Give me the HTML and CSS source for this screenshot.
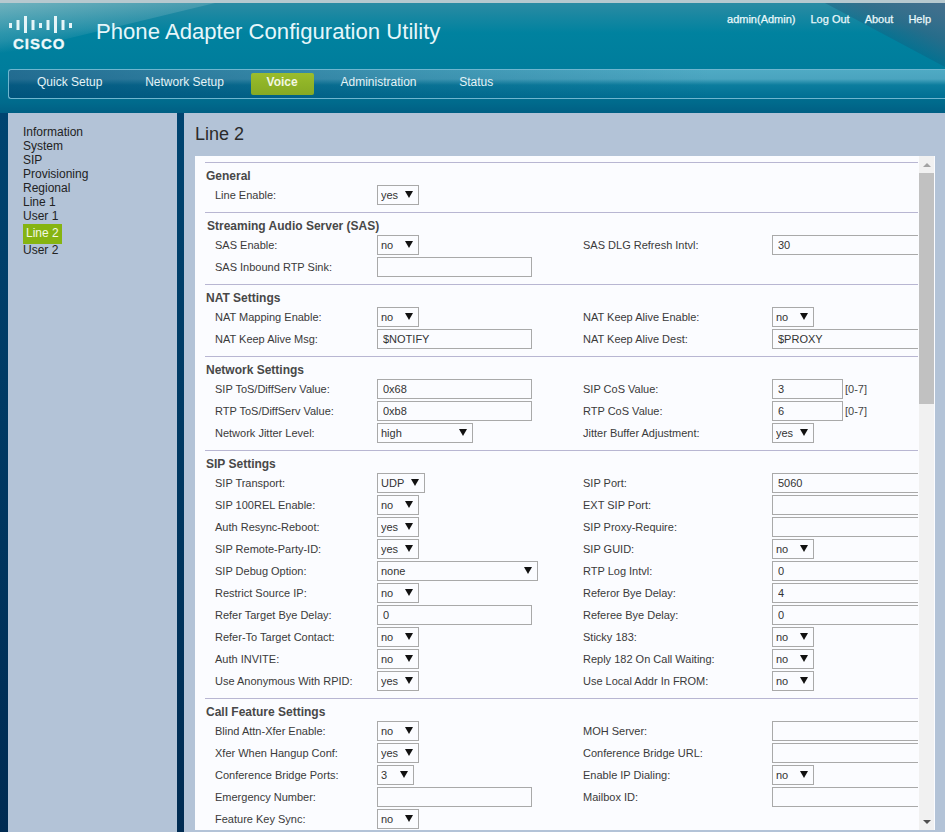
FILE: index.html
```html
<!DOCTYPE html>
<html lang="en">
<head>
<meta charset="utf-8">
<title>Phone Adapter Configuration Utility</title>
<link rel="stylesheet" href="styles.css">
</head>
<body>
<header class="header">
  <div class="top">
    <div class="logo">
      <svg class="bars" width="64" height="20" viewBox="0 0 64 20" aria-hidden="true">
        <rect x="0" y="7" width="3" height="5"/><rect x="7.5" y="4" width="3" height="10"/><rect x="15" y="0" width="3" height="17"/><rect x="22.500" y="4" width="3" height="10"/><rect x="30" y="7" width="3" height="5"/><rect x="37.500" y="4" width="3" height="10"/><rect x="45" y="0" width="3" height="17"/><rect x="52.500" y="4" width="3" height="10"/><rect x="60" y="7" width="3" height="5"/>
      </svg>
      <span class="wordmark">CISCO</span>
    </div>
    <h1 class="app-title">Phone Adapter Configuration Utility</h1>
    <nav class="user-links"><a>admin(Admin)</a><a>Log Out</a><a>About</a><a>Help</a></nav>
  </div>
  <nav class="tabs">
    <a class="tab">Quick Setup</a><a class="tab">Network Setup</a><a class="tab tab-active">Voice</a><a class="tab">Administration</a><a class="tab">Status</a>
  </nav>
</header>
<div class="layout">
  <aside class="sidebar">
    <a class="side-link">Information</a>
    <a class="side-link">System</a>
    <a class="side-link">SIP</a>
    <a class="side-link">Provisioning</a>
    <a class="side-link">Regional</a>
    <a class="side-link">Line 1</a>
    <a class="side-link">User 1</a>
    <a class="side-link side-active">Line 2</a>
    <a class="side-link">User 2</a>
  </aside>
  <main class="main">
    <h2 class="page-title">Line 2</h2>
    <div class="box">
      <div class="pane">
        <section class="group">
          <h3>General</h3>
          <div class="row"><label>Line Enable:</label><select class="s42"><option>yes</option></select></div>
        </section>
        <section class="group">
          <h3 class="indent">Streaming Audio Server (SAS)</h3>
          <div class="row"><label>SAS Enable:</label><select class="s42"><option>no</option></select><label>SAS DLG Refresh Intvl:</label><input value="30"></div>
          <div class="row"><label>SAS Inbound RTP Sink:</label><input></div>
        </section>
        <section class="group">
          <h3>NAT Settings</h3>
          <div class="row"><label>NAT Mapping Enable:</label><select class="s42"><option>no</option></select><label>NAT Keep Alive Enable:</label><select class="s42"><option>no</option></select></div>
          <div class="row"><label>NAT Keep Alive Msg:</label><input value="$NOTIFY"><label>NAT Keep Alive Dest:</label><input value="$PROXY"></div>
        </section>
        <section class="group">
          <h3>Network Settings</h3>
          <div class="row"><label>SIP ToS/DiffServ Value:</label><input value="0x68"><label>SIP CoS Value:</label><span class="unit"><input class="short" value="3">[0-7]</span></div>
          <div class="row"><label>RTP ToS/DiffServ Value:</label><input value="0xb8"><label>RTP CoS Value:</label><span class="unit"><input class="short" value="6">[0-7]</span></div>
          <div class="row"><label>Network Jitter Level:</label><select class="s96"><option>high</option></select><label>Jitter Buffer Adjustment:</label><select class="s42"><option>yes</option></select></div>
        </section>
        <section class="group">
          <h3>SIP Settings</h3>
          <div class="row"><label>SIP Transport:</label><select class="s48"><option>UDP</option></select><label>SIP Port:</label><input value="5060"></div>
          <div class="row"><label>SIP 100REL Enable:</label><select class="s42"><option>no</option></select><label>EXT SIP Port:</label><input></div>
          <div class="row"><label>Auth Resync-Reboot:</label><select class="s42"><option>yes</option></select><label>SIP Proxy-Require:</label><input></div>
          <div class="row"><label>SIP Remote-Party-ID:</label><select class="s42"><option>yes</option></select><label>SIP GUID:</label><select class="s42"><option>no</option></select></div>
          <div class="row"><label>SIP Debug Option:</label><select class="s161"><option>none</option></select><label>RTP Log Intvl:</label><input value="0"></div>
          <div class="row"><label>Restrict Source IP:</label><select class="s42"><option>no</option></select><label>Referor Bye Delay:</label><input value="4"></div>
          <div class="row"><label>Refer Target Bye Delay:</label><input value="0"><label>Referee Bye Delay:</label><input value="0"></div>
          <div class="row"><label>Refer-To Target Contact:</label><select class="s42"><option>no</option></select><label>Sticky 183:</label><select class="s42"><option>no</option></select></div>
          <div class="row"><label>Auth INVITE:</label><select class="s42"><option>no</option></select><label>Reply 182 On Call Waiting:</label><select class="s42"><option>no</option></select></div>
          <div class="row"><label>Use Anonymous With RPID:</label><select class="s42"><option>yes</option></select><label>Use Local Addr In FROM:</label><select class="s42"><option>no</option></select></div>
        </section>
        <section class="group">
          <h3>Call Feature Settings</h3>
          <div class="row"><label>Blind Attn-Xfer Enable:</label><select class="s42"><option>no</option></select><label>MOH Server:</label><input></div>
          <div class="row"><label>Xfer When Hangup Conf:</label><select class="s42"><option>yes</option></select><label>Conference Bridge URL:</label><input></div>
          <div class="row"><label>Conference Bridge Ports:</label><select class="s37"><option>3</option></select><label>Enable IP Dialing:</label><select class="s42"><option>no</option></select></div>
          <div class="row"><label>Emergency Number:</label><input><label>Mailbox ID:</label><input></div>
          <div class="row"><label>Feature Key Sync:</label><select class="s42"><option>no</option></select></div>
        </section>
      </div>
      <div class="scrollbar" aria-hidden="true">
        <div class="sb-btn"><span class="arrow-up"></span></div>
        <div class="sb-thumb"></div>
        <div class="sb-space"></div>
        <div class="sb-btn"><span class="arrow-down"></span></div>
      </div>
    </div>
  </main>
</div>
</body>
</html>
```
FILE: styles.css
```css
* { box-sizing: border-box; }
html, body { margin: 0; height: 832px; overflow: hidden; }
body {
  font-family: "Liberation Sans", Arial, sans-serif;
  font-size: 11px;
  color: #333;
  background: linear-gradient(180deg, #004470 113px, #002b52 100%);
}

/* Header */
.header {
  position: relative;
  height: 113px;
  border-top: 3px solid #b7c9cf;
  background: linear-gradient(180deg, #2b8ba3 0, #00829f 30px, #007d9c 66px, #006a8c 100px, #005f84 110px);
  overflow: hidden;
}
.header::before {
  content: "";
  position: absolute;
  inset: 0;
  background: linear-gradient(172deg, rgba(150, 200, 205, .62) 0, rgba(110, 175, 190, .3) 38px, rgba(0, 80, 120, 0) 50px);
  clip-path: polygon(0 0, 215px 0, 0 52px);
}
.header::after {
  content: "";
  position: absolute;
  inset: 0;
  background: linear-gradient(205deg, #446f8d 0, rgba(55, 100, 130, .7) 35px, rgba(0, 90, 125, .35) 60px, rgba(0, 110, 140, 0) 75px);
  clip-path: polygon(825px 0, 945px 0, 945px 64px);
}
.top {
  position: relative;
  z-index: 1;
  display: flex;
  height: 66px;
  padding: 13px 14px 0 9px;
}
.logo { width: 87px; display: flex; flex-direction: column; }
.bars { display: block; fill: #e6f5f8; }
.wordmark {
  margin: 1px 0 0 4px;
  font-size: 15px;
  line-height: 13px;
  font-weight: 700;
  letter-spacing: 1px;
  -webkit-text-stroke: .3px #eef9fb;
  color: #eef9fb;
}
.app-title {
  margin: 2px 0 0;
  font-size: 22.13px;
  line-height: 28px;
  font-weight: 400;
  color: #e6f6fa;
}
.user-links {
  margin-left: auto;
  display: flex;
  gap: 15px;
  margin-top: -4px;
  font-size: 11px;
  line-height: 14px;
  font-weight: 400;
  -webkit-text-stroke: .25px #eaf8fb;
  color: #eaf8fb;
}
.tabs {
  position: relative;
  z-index: 1;
  display: flex;
  gap: 10.75px;
  height: 30px;
  margin-left: 8px;
  padding: 3px 0 0 12px;
  border: 1px solid #6fb6cf;
  border-right: 0;
  border-radius: 3px 0 0 3px;
  background: linear-gradient(90deg, rgba(0, 60, 105, .55) 0, rgba(0, 70, 110, .2) 45%, rgba(0, 70, 110, 0) 75%),
              linear-gradient(180deg, #4faac4 0, #4aa4bf 9px, #0c7d9e 15px, #006f93 100%);
}
.tab {
  height: 22px;
  padding: 0 16px;
  font-size: 12px;
  line-height: 19px;
  color: #e4f3f7;
  border-radius: 2px;
}
.tab-active {
  font-weight: 700;
  color: #f2f7e2;
  background: linear-gradient(180deg, #9bbd2c 0, #8fb327 50%, #86a924 100%);
}

/* Layout */
.layout { display: flex; gap: 7px; height: 719px; padding-left: 8px; }
.sidebar {
  width: 169px;
  display: flex;
  flex-direction: column;
  align-items: flex-start;
  padding: 12px 15px;
  background: #b3c3d7;
}
.side-link { font-size: 12px; line-height: 14px; color: #222; }
.side-active {
  width: 39px;
  height: 20px;
  margin: 1px 0 -1px;
  padding-left: 3px;
  line-height: 18px;
  color: #f3f8e4;
  background: #86b411;
}
.main { flex: 1; min-width: 0; background: #b3c3d7; }
.page-title {
  height: 43px;
  margin: 0;
  padding-left: 11px;
  font-size: 18px;
  line-height: 42px;
  font-weight: 400;
  color: #2b2b2b;
}
.box {
  display: flex;
  width: 740px;
  height: 674px;
  margin-left: 11px;
  padding: 0 1px 0 10px;
  background: #fbfcff;
}
.pane { width: 713px; height: 100%; padding-top: 6px; overflow: hidden; margin-right: 1px; }
.group { border-top: 1px solid #b8b6d2; padding-bottom: 6px; }
.group h3 {
  height: 21px;
  margin: 0;
  padding: 6px 0 0 1px;
  font-size: 12px;
  line-height: 14px;
  font-weight: 700;
  color: #484848;
}
.group h3.indent { padding-left: 2px; }
.row {
  display: grid;
  grid-template-columns: 162px 206px 189px 1fr;
  align-items: center;
  height: 22px;
  padding-left: 10px;
}
label { color: #3a3a3a; white-space: nowrap; }
input, select {
  height: 20px;
  margin: 0;
  font: 11px "Liberation Sans", Arial, sans-serif;
  color: #333;
  background-color: transparent;
  border: 1px solid #a9a9a9;
  border-radius: 0;
  outline: 0;
}
input { width: 155px; padding: 0 5px; }
input.short { width: 71px; }
.unit { display: flex; align-items: center; gap: 2px; color: #444; }
select {
  appearance: none;
  padding: 0 0 0 3px;
  background-image: url("data:image/svg+xml,%3Csvg xmlns='http://www.w3.org/2000/svg' width='8' height='7'%3E%3Cpath d='M0 0h8L4 7z' fill='%23111'/%3E%3C/svg%3E");
  background-repeat: no-repeat;
  background-position: right 5px top 5px;
}
.s37 { width: 37px; }
.s42 { width: 42px; }
.s48 { width: 48px; }
.s96 { width: 96px; }
.s161 { width: 161px; }

/* Scrollbar */
.scrollbar { width: 15px; height: 100%; display: flex; flex-direction: column; background: #f1f1f1; }
.sb-btn { height: 17px; display: flex; align-items: center; justify-content: center; }
.sb-thumb { height: 231px; background: #c1c1c1; }
.sb-space { flex: 1; }
.arrow-up, .arrow-down { width: 0; height: 0; border-left: 4px solid transparent; border-right: 4px solid transparent; }
.arrow-up { border-bottom: 4px solid #a3a3a3; }
.arrow-down { border-top: 4px solid #505050; }
```
